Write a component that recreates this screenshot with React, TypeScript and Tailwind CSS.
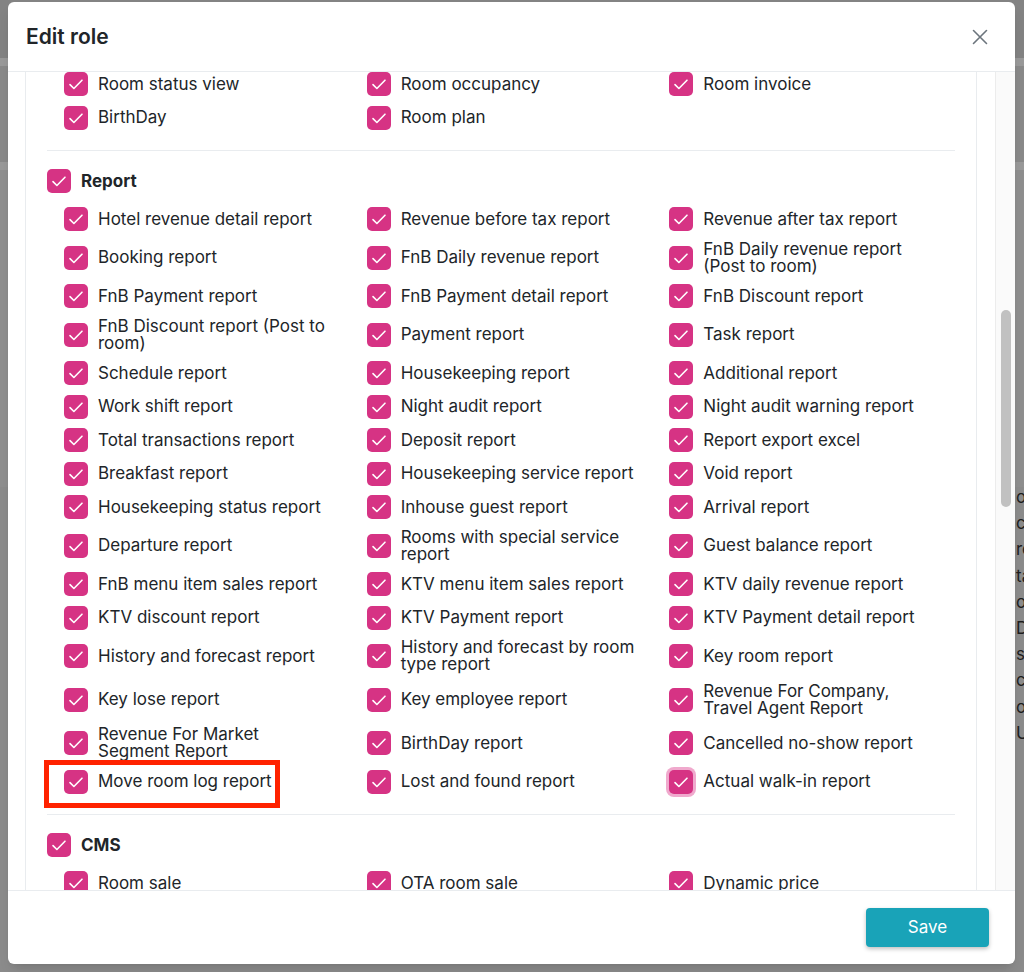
import React from 'react'

const roomItems = ['Room status view', 'Room occupancy', 'Room invoice', 'BirthDay', 'Room plan']

const reportItems = [
  'Hotel revenue detail report', 'Revenue before tax report', 'Revenue after tax report',
  'Booking report', 'FnB Daily revenue report', 'FnB Daily revenue report (Post to room)',
  'FnB Payment report', 'FnB Payment detail report', 'FnB Discount report',
  'FnB Discount report (Post to room)', 'Payment report', 'Task report',
  'Schedule report', 'Housekeeping report', 'Additional report',
  'Work shift report', 'Night audit report', 'Night audit warning report',
  'Total transactions report', 'Deposit report', 'Report export excel',
  'Breakfast report', 'Housekeeping service report', 'Void report',
  'Housekeeping status report', 'Inhouse guest report', 'Arrival report',
  'Departure report', 'Rooms with special service report', 'Guest balance report',
  'FnB menu item sales report', 'KTV menu item sales report', 'KTV daily revenue report',
  'KTV discount report', 'KTV Payment report', 'KTV Payment detail report',
  'History and forecast report', 'History and forecast by room type report', 'Key room report',
  'Key lose report', 'Key employee report', 'Revenue For Company, Travel Agent Report',
  'Revenue For Market Segment Report', 'BirthDay report', 'Cancelled no-show report',
  'Move room log report', 'Lost and found report', 'Actual walk-in report',
]

const cmsItems = ['Room sale', 'OTA room sale', 'Dynamic price', 'Promotion', 'Voucher', 'Blog']

const behindText = ['oc', 'ch', 'ro', 'ta', 'oc', 'De', 'sc', 'cl', 'oc', 'Ur']

// label widths per column, so long names wrap where the screen wraps them
const colWidths = ['w-[231px]', 'w-[237px]', 'w-[233px]']

function Box({ focused = false }: { focused?: boolean }) {
  return (
    <span
      className={
        'flex h-6 w-6 shrink-0 items-center justify-center rounded-[5px] bg-[#d63384] ' +
        (focused ? 'ring-[3px] ring-[#f0a9cd]' : '')
      }
    >
      <svg width="24" height="24" viewBox="0 0 24 24" fill="none">
        <path d="M6 12.6l3.9 3.9L18 8.2" stroke="white" strokeWidth="1.6" strokeLinecap="round" strokeLinejoin="round" />
      </svg>
    </span>
  )
}

function Item({ label, col, focused, marked }: { label: string; col: number; focused?: boolean; marked?: boolean }) {
  return (
    <div className="flex items-center pl-[17px]">
      <div className="relative flex items-center gap-[10px]">
        <Box focused={focused} />
        <span className={colWidths[col] + ' text-[17px] leading-[17px] text-[#212529]'}>{label}</span>
        {marked && (
          <div className="pointer-events-none absolute left-[-20px] top-[-10px] h-[48px] w-[236px] border-[5px] border-[#ff2200]" />
        )}
      </div>
    </div>
  )
}

function Grid({ items }: { items: string[] }) {
  return (
    <div className="grid grid-cols-3 gap-y-[9.5px]">
      {items.map((label, i) => (
        <Item
          key={label}
          label={label}
          col={i % 3}
          focused={label === 'Actual walk-in report'}
          marked={label === 'Move room log report'}
        />
      ))}
    </div>
  )
}

function SectionHead({ title }: { title: string }) {
  return (
    <div className="flex items-center gap-[10px]">
      <Box />
      <span className="text-[17px] font-bold text-[#212529]">{title}</span>
    </div>
  )
}

export default function App() {
  return (
    <div className="relative h-[972px] w-[1024px] overflow-hidden bg-[#8c8c8c] font-['Inter','Liberation_Sans',sans-serif]">
      {/* page behind the overlay */}
      <div className="flex h-full flex-col">
        <div className="h-[58px] bg-[#838383]" />
        <div className="h-[8px] bg-[#9a9a9a]" />
        <div className="h-[96px] bg-[#8a8a8a]" />
        <div className="h-[8px] bg-[#9a9a9a]" />
        <div className="h-[316px] bg-[#8f8f8f] pl-[1016px] pt-[317px]">
          <div className="flex flex-col gap-[6.2px] text-[17px] leading-[20px] text-[#1f1f1f]">
            {behindText.map((t, i) => (
              <span key={i}>{t}</span>
            ))}
          </div>
        </div>
      </div>

      {/* modal */}
      <div className="absolute left-[8px] top-[2px] flex h-[962px] w-[1007px] flex-col overflow-hidden rounded-[6px] bg-white shadow-lg">
        <header className="flex h-[70px] shrink-0 items-center justify-between border-b border-[#e9ecef] pl-[18px] pr-[26px]">
          <h1 className="text-[21px] font-semibold text-[#212529]">Edit role</h1>
          <svg width="16" height="16" viewBox="0 0 16 16" className="mr-[1px]">
            <path d="M1.5 1.5l13 13M14.5 1.5l-13 13" stroke="#6c757d" strokeWidth="1.6" strokeLinecap="round" />
          </svg>
        </header>

        <div className="flex min-h-0 flex-1">
          <div className="min-w-0 flex-1 overflow-hidden pl-[17px] pr-[18px]">
            <div className="h-full border-x border-[#e9ecef] px-[21px]">
              <Grid items={roomItems} />
              <div className="mt-[20px] border-t border-[#e9ecef]" />
              <div className="mt-[18px]">
                <SectionHead title="Report" />
              </div>
              <div className="mt-[13px]">
                <Grid items={reportItems} />
              </div>
              <div className="mt-[20px] border-t border-[#e9ecef]" />
              <div className="mt-[18px]">
                <SectionHead title="CMS" />
              </div>
              <div className="mt-[13px]">
                <Grid items={cmsItems} />
              </div>
            </div>
          </div>
          <div className="w-[20px] shrink-0 border-l border-[#ececec] bg-[#fafafa] pl-[5px] pt-[238px]">
            <div className="h-[197px] w-[10px] rounded-full bg-[#c1c1c1]" />
          </div>
        </div>

        <footer className="flex h-[74px] shrink-0 items-center justify-end border-t border-[#e9ecef] pr-[26px]">
          <button className="h-[39px] w-[123px] rounded-[4px] bg-[#19a3b8] text-[17px] text-white shadow-[0_2px_4px_rgba(0,0,0,0.25)]">
            Save
          </button>
        </footer>
      </div>
    </div>
  )
}
